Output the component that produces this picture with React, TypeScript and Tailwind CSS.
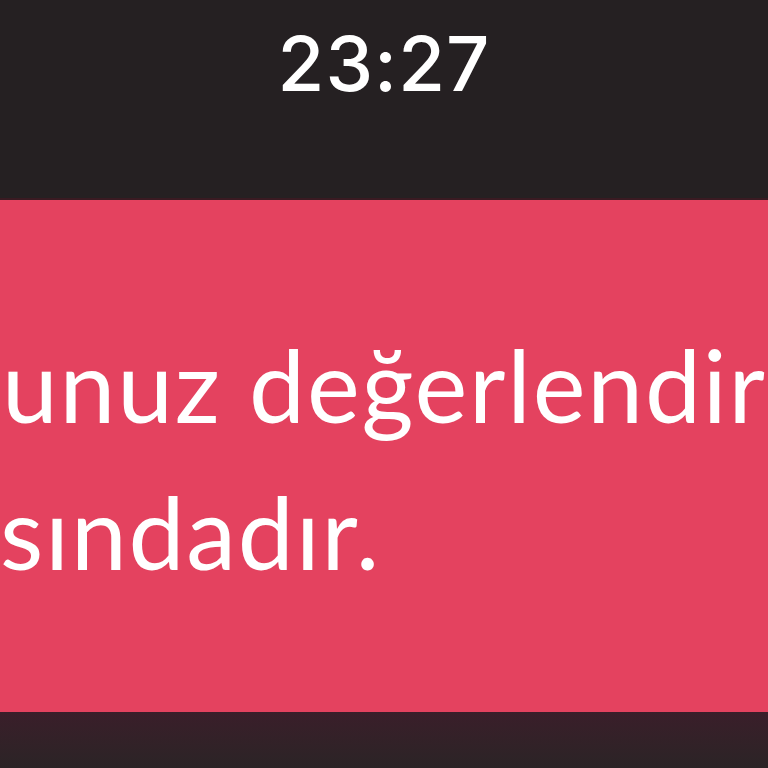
export default function App() {
  return (
    <div className="w-[768px] h-[768px] overflow-hidden flex flex-col bg-[#231f20]">
      {/* Status area */}
      <div className="h-[198px] shrink-0 flex justify-center pt-[25px] bg-[#252022]">
        <span className="text-[76px] leading-none font-medium text-white tracking-[1px] [font-family:Inter,'Liberation_Sans',sans-serif]">
          23:27
        </span>
      </div>

      {/* Message card */}
      <div className="h-[514px] shrink-0 bg-[#e4425f] overflow-hidden border-t-2 border-[#3a1a22] pt-[111px]">
        <div className="text-white text-[100px] leading-[147px] tracking-[1.8px] whitespace-nowrap [font-family:Lato,'Noto_Sans',sans-serif]">
          <p className="ml-[2px]">unuz değerlendirme</p>
          <p>sındadır.</p>
        </div>
      </div>

      {/* Bottom edge */}
      <div className="flex-1 bg-gradient-to-b from-[#3a1e2a] to-[#2b2426]" />
    </div>
  );
}
